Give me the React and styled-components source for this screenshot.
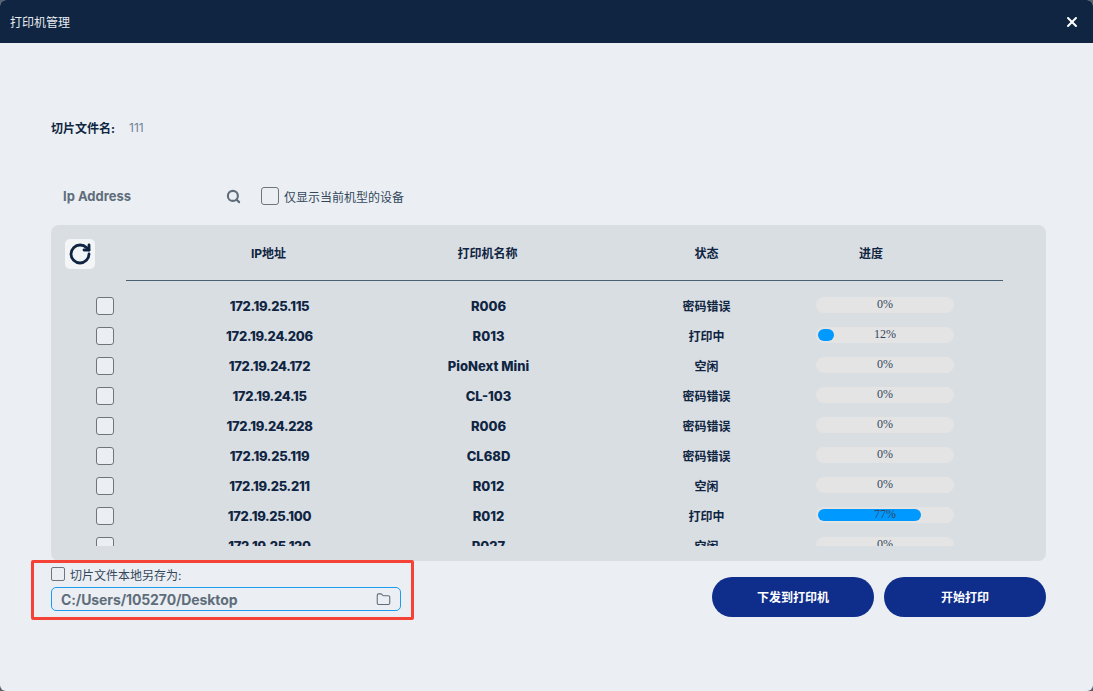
import React from "react";
import styled, { createGlobalStyle } from "styled-components";
import { Folder, RotateCw, Search, X } from "lucide-react";

const FONT = `Inter, "Noto Sans CJK SC", sans-serif`;

const printers = [
  { ip: "172.19.25.115", name: "R006", status: "密码错误", progress: 0 },
  { ip: "172.19.24.206", name: "R013", status: "打印中", progress: 12 },
  { ip: "172.19.24.172", name: "PioNext Mini", status: "空闲", progress: 0 },
  { ip: "172.19.24.15", name: "CL-103", status: "密码错误", progress: 0 },
  { ip: "172.19.24.228", name: "R006", status: "密码错误", progress: 0 },
  { ip: "172.19.25.119", name: "CL68D", status: "密码错误", progress: 0 },
  { ip: "172.19.25.211", name: "R012", status: "空闲", progress: 0 },
  { ip: "172.19.25.100", name: "R012", status: "打印中", progress: 77 },
  { ip: "172.19.25.120", name: "R027", status: "空闲", progress: 0 },
];

const GlobalStyle = createGlobalStyle`
  html, body {
    margin: 0;
    padding: 0;
    background: #56616c;
  }
  * {
    box-sizing: border-box;
  }
`;

const Dialog = styled.div`
  width: 1093px;
  height: 691px;
  background: #ebeff3;
  border-radius: 6px;
  overflow: hidden;
  font-family: ${FONT};
  color: #0f2542;
`;

const TitleBar = styled.div`
  height: 43px;
  background: #0f2542;
  color: #e8ecf0;
  font-size: 12px;
  padding: 0 13px 0 10px;
  display: flex;
  align-items: center;
  justify-content: space-between;
`;

const CloseIcon = styled(X)`
  color: #fff;
  margin-top: 1px;
`;

const Body = styled.div`
  padding: 75px 47px 0 51px;
`;

const FileRow = styled.div`
  height: 18px;
  display: flex;
  align-items: center;
  gap: 14px;
  font-size: 12px;
`;

const FileLabel = styled.span`
  font-weight: 700;
`;

const FileName = styled.span`
  color: #6f8296;
`;

const SearchRow = styled.div`
  height: 18px;
  margin-top: 51px;
  display: flex;
  align-items: center;
`;

const SearchField = styled.div`
  width: 175px;
  padding-left: 12px;
  font-size: 13px;
  font-weight: 700;
  color: #5f6d7b;
`;

const SearchIcon = styled(Search)`
  color: #5f6d7b;
  margin-right: 20px;
`;

const Box = styled.span`
  flex: none;
  display: block;
  width: ${(props) => props.size}px;
  height: ${(props) => props.size}px;
  border: 1px solid #6e757c;
  border-radius: ${(props) => (props.size > 14 ? 3 : 2)}px;
  background: #ebeff3;
`;

const CheckLabel = styled.span`
  margin-left: 5px;
  font-size: 12px;
  color: #33475c;
`;

const Panel = styled.div`
  margin-top: 20px;
  height: 336px;
  background: #d9dee3;
  border-radius: 8px;
  padding-top: 14px;
`;

const HeadRow = styled.div`
  height: 41px;
  display: grid;
  grid-template-columns: 108px 219px 219px 219px 1fr;
  font-size: 12px;
  font-weight: 700;
  text-align: center;
`;

const RefreshButton = styled.div`
  width: 30px;
  height: 30px;
  margin-left: 14px;
  background: #f4f5f6;
  border-radius: 5px;
  display: flex;
  align-items: center;
  justify-content: center;
`;

const HeadCell = styled.div`
  line-height: 29px;
`;

const ProgressHead = styled(HeadCell)`
  text-align: left;
  padding-left: 43px;
`;

const HeadRule = styled.div`
  height: 1px;
  margin: 0 43px 0 75px;
  background: #4b6073;
`;

const List = styled.div`
  height: 255px;
  margin-top: 10px;
  overflow: hidden;
`;

const Row = styled.div`
  height: 30px;
  display: grid;
  grid-template-columns: 108px 219px 219px 219px 138px;
  align-items: center;
  text-align: center;
`;

const RowCheck = styled.div`
  padding-left: 45px;
`;

const Cell = styled.div`
  padding-left: 2px;
  font-size: 13px;
  font-weight: 800;
  color: #0f2542;
`;

const IpCell = styled(Cell)`
  letter-spacing: -0.3px;
`;

const StatusCell = styled(Cell)`
  padding-left: 0;
  font-size: 12px;
  font-weight: 700;
  margin-top: -1px;
`;

const Progress = styled.div`
  position: relative;
  height: 16px;
  padding: 2px;
  border-radius: 8px;
  background: #e4e4e4;
  margin-top: -2px;
`;

const ProgressFill = styled.div`
  height: 12px;
  border-radius: 6px;
  background: #0099ff;
`;

const ProgressText = styled.span`
  position: absolute;
  inset: 0;
  font-family: "Liberation Serif", serif;
  font-size: 12px;
  line-height: 14px;
  color: #33475c;
`;

const Footer = styled.div`
  display: flex;
  justify-content: space-between;
  align-items: flex-start;
`;

const SaveBlock = styled.div`
  position: relative;
  width: 350px;
  padding-top: 6px;
`;

const SaveCheck = styled.div`
  height: 14px;
  display: flex;
  align-items: center;
`;

const PathField = styled.div`
  height: 24px;
  margin-top: 6px;
  padding: 0 9px;
  border: 1px solid #1c9cf0;
  border-radius: 5px;
  display: flex;
  align-items: center;
  justify-content: space-between;
  font-size: 14px;
  font-weight: 700;
  letter-spacing: -0.1px;
  color: #5f6d7b;
`;

const Highlight = styled.div`
  position: absolute;
  left: -20px;
  top: -1px;
  width: 383px;
  height: 60px;
  border: 3px solid #f44336;
  border-radius: 2px;
  pointer-events: none;
`;

const Actions = styled.div`
  display: flex;
  gap: 10px;
  margin-top: 16px;
`;

const ActionButton = styled.button`
  width: 162px;
  height: 40px;
  border: 0;
  border-radius: 20px;
  padding: 0 0 1px;
  background: #0f2e8c;
  color: #fff;
  font-family: ${FONT};
  font-size: 12px;
  font-weight: 700;
`;

export default function App() {
  return (
    <>
      <GlobalStyle />
      <Dialog>
        <TitleBar>
          打印机管理
          <CloseIcon size={16} strokeWidth={3} />
        </TitleBar>
        <Body>
          <FileRow>
            <FileLabel>切片文件名:</FileLabel>
            <FileName>111</FileName>
          </FileRow>
          <SearchRow>
            <SearchField>Ip Address</SearchField>
            <SearchIcon size={15} strokeWidth={3.4} />
            <Box size={18} />
            <CheckLabel>仅显示当前机型的设备</CheckLabel>
          </SearchRow>
          <Panel>
            <HeadRow>
              <RefreshButton>
                <RotateCw size={24} strokeWidth={2.8} color="#0f2542" />
              </RefreshButton>
              <HeadCell>IP地址</HeadCell>
              <HeadCell>打印机名称</HeadCell>
              <HeadCell>状态</HeadCell>
              <ProgressHead>进度</ProgressHead>
            </HeadRow>
            <HeadRule />
            <List>
              {printers.map((p) => (
                <Row key={p.ip}>
                  <RowCheck>
                    <Box size={18} />
                  </RowCheck>
                  <IpCell>{p.ip}</IpCell>
                  <Cell>{p.name}</Cell>
                  <StatusCell>{p.status}</StatusCell>
                  <Progress>
                    {p.progress > 0 && (
                      <ProgressFill style={{ width: `${p.progress}%` }} />
                    )}
                    <ProgressText>{p.progress}%</ProgressText>
                  </Progress>
                </Row>
              ))}
            </List>
          </Panel>
          <Footer>
            <SaveBlock>
              <SaveCheck>
                <Box size={14} />
                <CheckLabel>切片文件本地另存为:</CheckLabel>
              </SaveCheck>
              <PathField>
                C:/Users/105270/Desktop
                <Folder size={15} strokeWidth={1.75} />
              </PathField>
              <Highlight />
            </SaveBlock>
            <Actions>
              <ActionButton>下发到打印机</ActionButton>
              <ActionButton>开始打印</ActionButton>
            </Actions>
          </Footer>
        </Body>
      </Dialog>
    </>
  );
}
